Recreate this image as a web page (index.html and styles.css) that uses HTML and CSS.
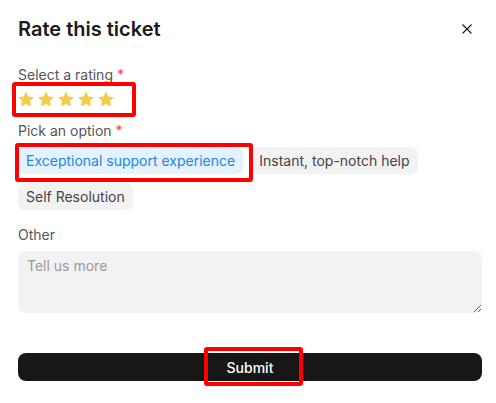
FILE: index.html
```html
<!DOCTYPE html>
<html lang="en">
<head>
<meta charset="utf-8">
<title>Rate this ticket</title>
<link rel="stylesheet" href="styles.css">
</head>
<body>
<div class="dialog">
  <div class="header">
    <h1 class="title">Rate this ticket</h1>
    <button class="close" aria-label="Close">
      <svg width="10" height="10" viewBox="0 0 10 10"><path d="M0.5 0.5L9.5 9.5M9.5 0.5L0.5 9.5" stroke="#1a1a1a" stroke-width="1.1" fill="none"/></svg>
    </button>
  </div>

  <div class="label label-rating">Select a rating <span class="req">*</span></div>
  <div class="stars">
    <svg class="star" viewBox="2 1.5 20 20"><path d="M12 2l3.09 6.26L22 9.27l-5 4.87 1.18 6.88L12 17.77l-6.18 3.25L7 14.14 2 9.27l6.91-1.01L12 2z"/></svg>
    <svg class="star" viewBox="2 1.5 20 20"><path d="M12 2l3.09 6.26L22 9.27l-5 4.87 1.18 6.88L12 17.77l-6.18 3.25L7 14.14 2 9.27l6.91-1.01L12 2z"/></svg>
    <svg class="star" viewBox="2 1.5 20 20"><path d="M12 2l3.09 6.26L22 9.27l-5 4.87 1.18 6.88L12 17.77l-6.18 3.25L7 14.14 2 9.27l6.91-1.01L12 2z"/></svg>
    <svg class="star" viewBox="2 1.5 20 20"><path d="M12 2l3.09 6.26L22 9.27l-5 4.87 1.18 6.88L12 17.77l-6.18 3.25L7 14.14 2 9.27l6.91-1.01L12 2z"/></svg>
    <svg class="star" viewBox="2 1.5 20 20"><path d="M12 2l3.09 6.26L22 9.27l-5 4.87 1.18 6.88L12 17.77l-6.18 3.25L7 14.14 2 9.27l6.91-1.01L12 2z"/></svg>
  </div>

  <div class="label label-option">Pick an option <span class="req">*</span></div>
  <div class="chips">
    <span class="chip chip-selected">Exceptional support experience</span>
    <span class="chip">Instant, top-notch help</span>
    <span class="chip">Self Resolution</span>
  </div>

  <div class="label label-other">Other</div>
  <textarea class="other" placeholder="Tell us more"></textarea>

  <button class="submit">Submit</button>

  <div class="mark mark-stars"></div>
  <div class="mark mark-chip"></div>
  <div class="mark mark-submit"></div>
</div>
</body>
</html>
```

FILE: styles.css
```css
* { box-sizing: border-box; }
html, body { margin: 0; padding: 0; background: #ffffff; }
body {
  font-family: Inter, "Noto Sans", "Liberation Sans", sans-serif;
  color: #1a1a1a;
}
.dialog {
  position: relative;
  width: 496px;
  height: 403px;
  padding: 17px 14px 0 18px;
  display: flex;
  flex-direction: column;
}
.header {
  display: flex;
  justify-content: space-between;
  align-items: center;
  height: 24px;
}
.title {
  margin: 0;
  font-size: 20px;
  line-height: 24px;
  font-weight: 600;
  color: #1a1a1a;
}
.close {
  border: 0;
  background: none;
  padding: 0;
  margin-right: 10px;
  width: 10px;
  height: 10px;
  display: flex;
}
.label {
  font-size: 14px;
  line-height: 20px;
  color: #555555;
}
.req { color: #e5484d; }
.label-rating { margin-top: 24px; }
.stars {
  display: flex;
  gap: 4px;
  margin-top: 6px;
  height: 16px;
}
.star { width: 16px; height: 16px; fill: #f4cd4f; }
.label-option { margin-top: 14px; }
.chips {
  display: flex;
  flex-wrap: wrap;
  gap: 9px 8px;
  margin-top: 6px;
}
.chip {
  display: inline-flex;
  align-items: center;
  height: 27px;
  padding: 0 8px;
  border-radius: 7px;
  background: #f2f2f2;
  color: #444444;
  font-size: 14px;
}
.chip-selected {
  background: #e3f2fd;
  color: #1e88e5;
}
.label-other { margin-top: 15px; }
.other {
  margin-top: 6px;
  height: 62px;
  width: 464px;
  border: 0;
  border-radius: 7px;
  background: #f2f2f2;
  padding: 6px 9px;
  font-family: inherit;
  font-size: 14px;
  color: #1a1a1a;
  outline: none;
}
.other::placeholder { color: #9a9a9a; }
.submit {
  margin-top: 40px;
  width: 464px;
  height: 28px;
  border: 0;
  border-radius: 8px;
  background: #171717;
  color: #ffffff;
  font-family: inherit;
  font-size: 14px;
  font-weight: 500;
}
.mark {
  position: absolute;
  border: 4px solid #ff0000;
  border-radius: 3px;
  pointer-events: none;
}
.mark-stars { left: 12px; top: 82px; width: 124px; height: 35px; }
.mark-chip { left: 15px; top: 143px; width: 238px; height: 39px; }
.mark-submit { left: 204px; top: 347px; width: 99px; height: 39px; }
```
